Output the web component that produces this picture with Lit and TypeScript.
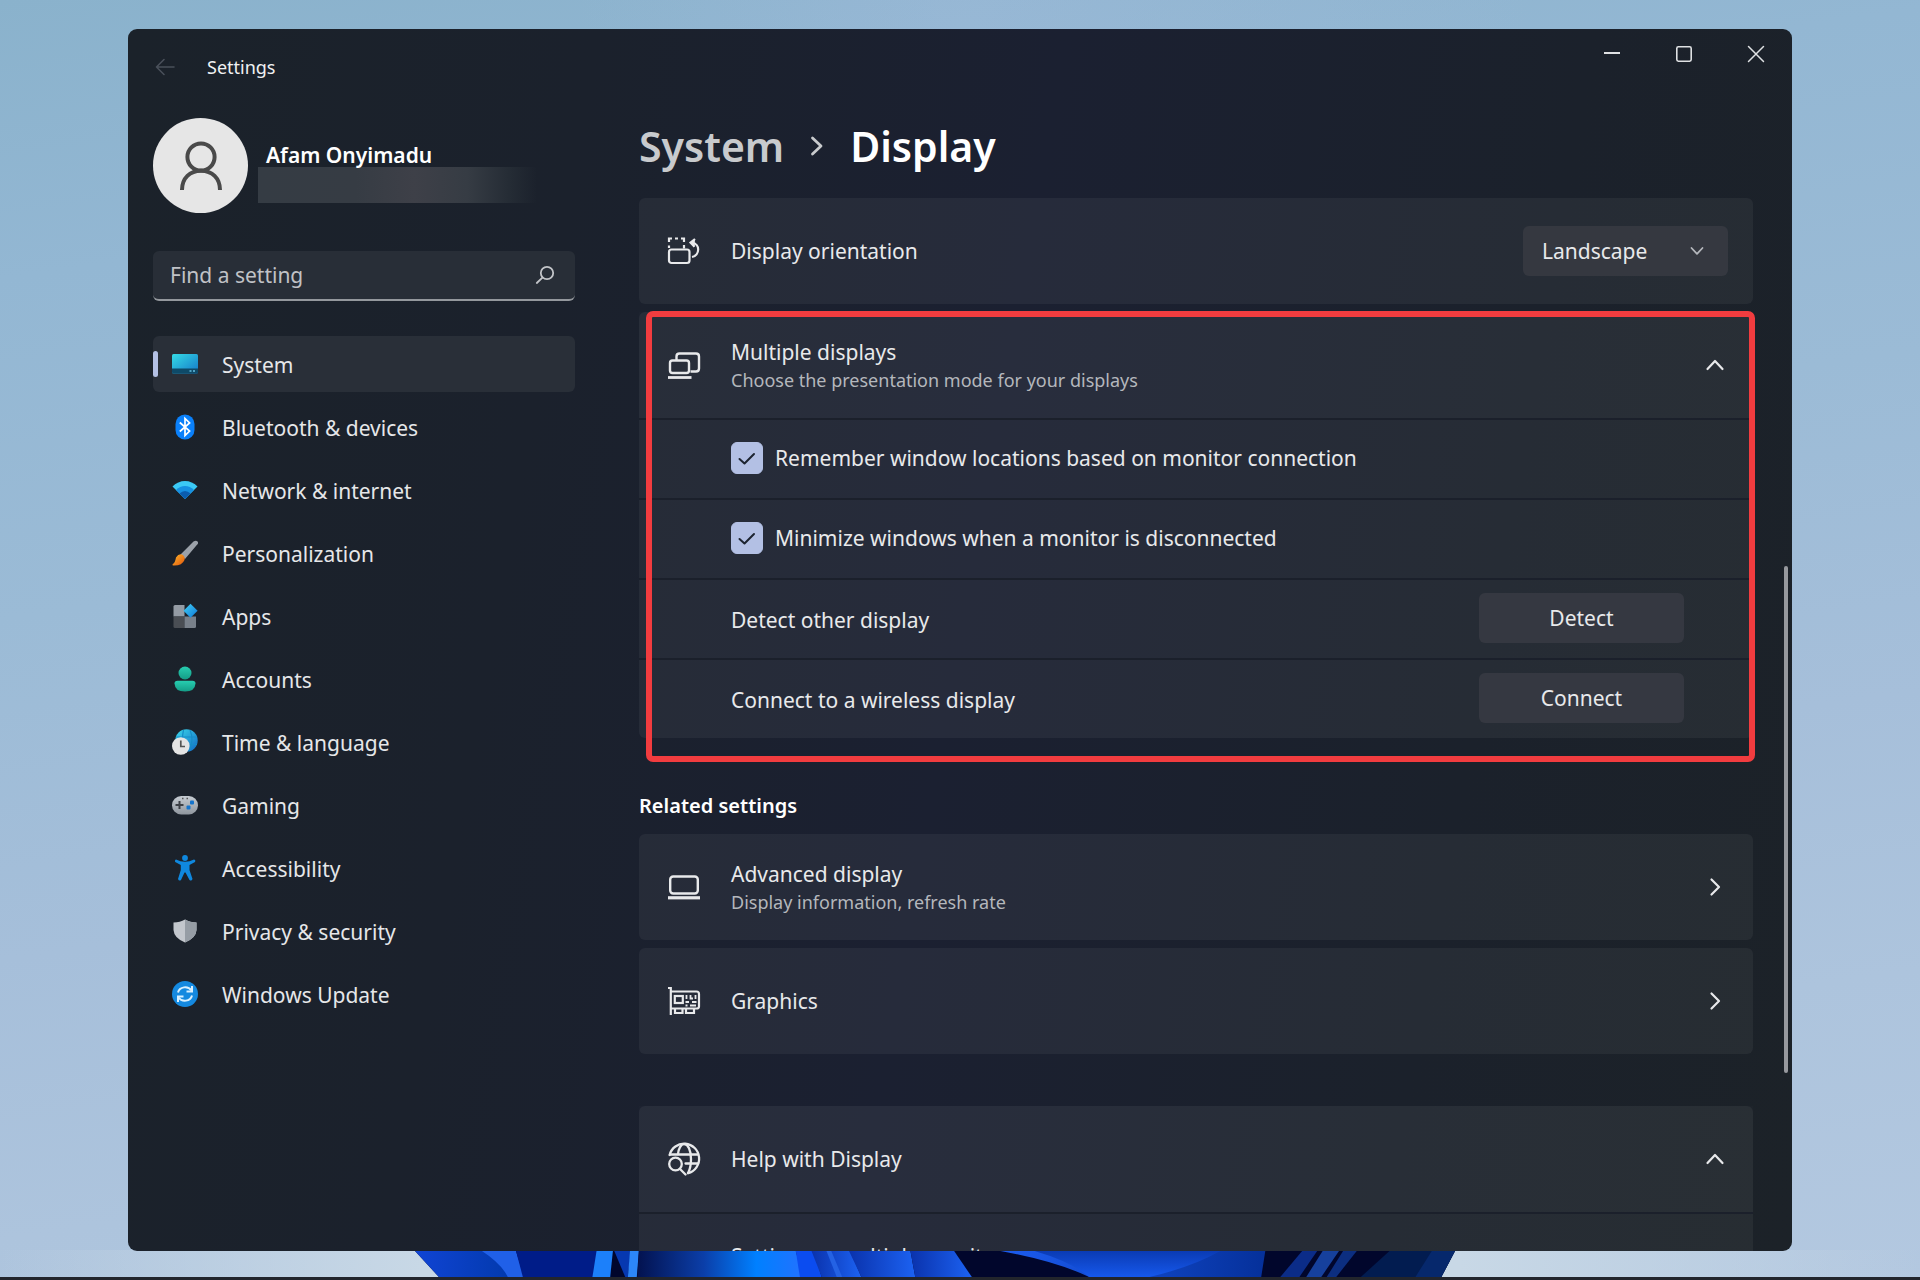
import { LitElement, html, css, svg, nothing, TemplateResult } from "lit";
import { customElement, property, state } from "lit/decorators.js";
import { classMap } from "lit/directives/class-map.js";

const lineIcons: Record<string, TemplateResult> = {
  back: svg`<svg class="icon" viewBox="0 0 20 20" width="20" height="20" fill="none" stroke="currentColor" stroke-width="1.6" stroke-linecap="round" stroke-linejoin="round"><path d="M19 10H1.5M9 2.5 1.5 10 9 17.5"/></svg>`,
  search: svg`<svg class="icon" viewBox="0 0 20 20" width="20" height="20" fill="none" stroke="currentColor" stroke-width="1.8" stroke-linecap="round"><circle cx="12" cy="8" r="6.2"/><path d="M7.4 12.6 1.8 18"/></svg>`,
  minimize: svg`<svg class="icon" viewBox="0 0 18 18" width="18" height="18" fill="none" stroke="currentColor" stroke-width="2"><path d="M1 8H17"/></svg>`,
  maximize: svg`<svg class="icon" viewBox="0 0 18 18" width="18" height="18" fill="none" stroke="currentColor" stroke-width="1.6"><rect x="1.8" y="1.8" width="14.4" height="14.4" rx="1.6"/></svg>`,
  close: svg`<svg class="icon" viewBox="0 0 18 18" width="18" height="18" fill="none" stroke="currentColor" stroke-width="1.5" stroke-linecap="round"><path d="M1.5 1.5 16.5 16.5M16.5 1.5 1.5 16.5"/></svg>`,
  crumb: svg`<svg class="icon" viewBox="0 0 14 20" width="14" height="20" fill="none" stroke="currentColor" stroke-width="2.8" stroke-linecap="round" stroke-linejoin="round"><path d="M2.5 2 11 10 2.5 18"/></svg>`,
  up: svg`<svg class="icon" viewBox="0 0 20 14" width="20" height="14" fill="none" stroke="currentColor" stroke-width="2.2" stroke-linecap="round" stroke-linejoin="round"><path d="M2.5 11 10 3 17.5 11"/></svg>`,
  down: svg`<svg class="icon" viewBox="0 0 14 10" width="14" height="10" fill="none" stroke="currentColor" stroke-width="1.8" stroke-linecap="round" stroke-linejoin="round"><path d="M1.5 2 7 7.8 12.5 2"/></svg>`,
  right: svg`<svg class="icon" viewBox="0 0 20 20" width="20" height="20" fill="none" stroke="currentColor" stroke-width="2.2" stroke-linecap="round" stroke-linejoin="round"><path d="M6.500 2.500 14 10 6.500 17.500"/></svg>`,
  check: svg`<svg class="icon tick" viewBox="0 0 20 16" width="20" height="16" fill="none" stroke="currentColor" stroke-width="2" stroke-linecap="round" stroke-linejoin="round"><path d="M2.5 9 7.5 13.5 17 4"/></svg>`,
  person: svg`<svg class="icon" viewBox="0 0 44 50" width="44" height="50" fill="none" stroke="#4a4a4a" stroke-width="4"><circle cx="22" cy="16" r="13.600"/><path d="M3 49C3 37 11 29.800 22 29.800S41 37 41 49"/></svg>`,
  orientation: svg`<svg class="icon" viewBox="0 0 34 34" width="34" height="34" fill="none" stroke="currentColor" stroke-width="2.200"><rect x="2" y="15.500" width="20.500" height="13.500" rx="2.500"/><path d="M2 14V11.500M2 8V4.500H5M8 4.500H11M14 4.500H17V8M17 11V14.500"/><path d="M25 23C33 21.500 33.500 9.500 25 8.800"/><path d="M28 5 23.500 8.600 27.500 12.800" fill="currentColor"/></svg>`,
  multiple: svg`<svg class="icon" viewBox="0 0 34 34" width="34" height="34" fill="none" stroke="currentColor" stroke-width="2.400"><path d="M9.500 12V8.500Q9.500 5.500 12.500 5.500H29Q32 5.500 32 8.500V20.500Q32 23.500 29 23.500H23.500"/><rect x="3" y="12.500" width="19" height="12.500" rx="2.500"/><path d="M1 29.500H24.500" stroke-width="2.800"/></svg>`,
  laptop: svg`<svg class="icon" viewBox="0 0 34 34" width="34" height="34" fill="none" stroke="currentColor" stroke-width="2.400"><rect x="3.200" y="6.500" width="27.600" height="17" rx="3"/><path d="M1 27.800H33" stroke-width="3.200"/></svg>`,
  graphics: svg`<svg class="icon" viewBox="0 0 34 34" width="34" height="34" fill="none" stroke="currentColor" stroke-width="2.200"><path d="M1 4H3.800V31"/><path d="M4 7.500H29.500Q32 7.500 32 10V22.500Q32 24.500 29.500 24.500H4"/><rect x="7.800" y="12" width="8" height="7"/><path d="M8 25V29H15.500V25M19 25V29H27V25"/><path d="M19.500 11V15M23.500 11V14.500H26M28.500 11V15M18.500 18H22M25 18H29.500M18.500 21.500H20.500M23 21.500H29" stroke-width="1.800"/></svg>`,
  help: svg`<svg class="icon" viewBox="0 0 34 34" width="34" height="34" fill="none" stroke="currentColor" stroke-width="2.300" stroke-linecap="round"><path d="M2.600 13A15 15 0 1 1 21 31.200"/><path d="M3 12.500H31M18.500 21.500H31"/><path d="M17 2.200C21 2.200 24 8 24 17S22.500 28 21 31M17 2.200C14 2.200 11.500 6.500 11 12"/><circle cx="8.500" cy="22" r="6.300"/><path d="M13 27 18.500 32.500"/></svg>`,
};

const navIcons: Record<string, TemplateResult> = {
  System: svg`<svg viewBox="0 0 26 26" width="26" height="26"><defs><linearGradient id="g" x2="1" y2="1"><stop stop-color="#35dbe6"/><stop offset="1" stop-color="#1478c8"/></linearGradient></defs><rect y="3" width="26" height="19.500" rx="1.500" fill="url(#g)"/><path d="M0 17.500H26V21Q26 22.500 24.500 22.500H1.500Q0 22.500 0 21Z" fill="#0e4a68"/><path d="M17.500 20H19.500M21 20H23" stroke="#66bfe0" stroke-width="1.500"/></svg>`,
  "Bluetooth & devices": svg`<svg viewBox="0 0 26 26" width="26" height="26"><rect x="3.500" y=".5" width="19" height="25" rx="9.500" fill="#0a80fa"/><path d="M7.800 8.500 17.600 17 13 21.500V4.500L17.600 9 7.800 17.500" fill="none" stroke="#fff" stroke-width="1.700"/></svg>`,
  "Network & internet": svg`<svg viewBox="0 0 26 26" width="26" height="26"><path d="M.5 9.500Q6 4 13 4T25.500 9.500L13 22Z" fill="#3bc9f5"/><path d="M4 13Q8 9 13 9T22 13L13 22Z" fill="#1690e2"/><path d="M7.500 16.500Q10 14 13 14T18.500 16.500L13 22Z" fill="#0b5cae"/></svg>`,
  Personalization: svg`<svg viewBox="0 0 26 26" width="26" height="26"><defs><linearGradient id="g" x2="1" y2="1"><stop stop-color="#ffb72a"/><stop offset="1" stop-color="#e0560e"/></linearGradient></defs><path d="M8.500 14.500 21.500 1.500Q24 0 25.500 1.500T24.800 5L13 19Z" fill="#9ba1a9"/><path d="M4 17.500Q6.500 13.500 10 14.500 13.500 16.500 12.500 20 10 26 1 25.500 0 25 .8 24 3 23 4 17.500Z" fill="url(#g)"/></svg>`,
  Apps: svg`<svg viewBox="0 0 26 26" width="26" height="26"><defs><linearGradient id="g" x2="1" y2="1"><stop stop-color="#43d0f5"/><stop offset="1" stop-color="#0d78d8"/></linearGradient></defs><path d="M1.500 3.500Q1.500 2 3 2H12.500V13.500H1.500Z" fill="#949ba4"/><path d="M1.500 13.500H12.500V25H3Q1.500 25 1.500 23.500Z" fill="#4a4e54"/><path d="M12.500 13.500H24V23.500Q24 25 22.500 25H12.500Z" fill="#78808a"/><path d="M18.500 .8 25.600 7.800 18.500 14.800 11.500 7.800Z" fill="url(#g)"/></svg>`,
  Accounts: svg`<svg viewBox="0 0 26 26" width="26" height="26"><defs><linearGradient id="g" x2="0" y2="1"><stop stop-color="#27cdb0"/><stop offset="1" stop-color="#149c86"/></linearGradient></defs><circle cx="13" cy="7" r="6.500" fill="url(#g)"/><path d="M5.500 14.800H20.500Q23.500 14.800 23.500 17.500 23 25.600 13 25.600T2.500 17.500Q2.500 14.800 5.500 14.800Z" fill="url(#g)"/></svg>`,
  "Time & language": svg`<svg viewBox="0 0 26 26" width="26" height="26"><defs><linearGradient id="g" x2="1" y2="1"><stop stop-color="#3cd8ea"/><stop offset="1" stop-color="#1068c4"/></linearGradient></defs><circle cx="14.500" cy="11.500" r="11.200" fill="url(#g)"/><path d="M4 8H25M5 15.500H25M11.500 1Q9 11 13 22M18 1Q22.500 11 17 22" fill="none" stroke="#168cc8" stroke-width="1.200"/><circle cx="8.800" cy="17" r="8.800" fill="#e4e4e4"/><path d="M8.800 11.500V17.500H13" fill="none" stroke="#555" stroke-width="1.700"/></svg>`,
  Gaming: svg`<svg viewBox="0 0 26 26" width="26" height="26"><defs><linearGradient id="g" x2="0" y2="1"><stop stop-color="#c6ccd2"/><stop offset="1" stop-color="#8f969e"/></linearGradient></defs><rect y="4" width="26" height="18.500" rx="9.200" fill="url(#g)"/><path d="M3.500 13H11.500M7.500 9V17" stroke="#3c4046" stroke-width="2"/><path d="M10 6.500H11.500M14.500 6.500H16" stroke="#555" stroke-width="1.500"/><rect x="18" y="8.500" width="4" height="4" rx="1" fill="#1474cc"/><rect x="14.500" y="13.500" width="4" height="4" rx="1" fill="#1474cc"/></svg>`,
  Accessibility: svg`<svg viewBox="0 0 26 26" width="26" height="26" fill="#0f88df"><circle cx="13" cy="3" r="2.900"/><path d="M4 4.500Q13 9 22 4.500 24 5 23 7L17.500 10V15L20.500 24Q19.500 26.500 17.500 25L13.500 17.500H12.500L9 25Q7 26.500 6 24L8.800 15V10L3.200 7Q2.500 5 4 4.500Z"/></svg>`,
  "Privacy & security": svg`<svg viewBox="0 0 26 26" width="26" height="26"><path d="M13 1.500Q18 4.500 24.500 4.500V12Q24 20 13 24.500 2 20 1.500 12V4.500Q8 4.500 13 1.500Z" fill="#c3c7cd"/><path d="M13 1.500Q18 4.500 24.500 4.500V12Q24 20 13 24.500Z" fill="#969da5"/></svg>`,
  "Windows Update": svg`<svg viewBox="0 0 26 26" width="26" height="26" fill="none" stroke="#d8f0ff" stroke-width="2"><circle cx="13" cy="13" r="13" fill="#1489e0" stroke="none"/><path d="M6 11.500C7.500 5.500 16 4.500 19.500 9.500M20 14.500C18.500 20.500 10 21.500 6.500 16.500"/><path d="M20 5V10.500H14.500M6 21V15.500H11.500"/></svg>`,
};

const resets = css`
  * { box-sizing: border-box; }
  button, input, select { font: inherit; color: inherit; margin: 0; border: 0; }
  button { cursor: pointer; }
  .icon { display: block; flex: none; }
`;

@customElement("nav-icon")
class NavIcon extends LitElement {
  static styles = css`:host { display: block; width: 26px; height: 26px; } svg { display: block; }`;
  @property() name = "";
  render() {
    return navIcons[this.name] ?? nothing;
  }
}

@customElement("settings-sidebar")
class SettingsSidebar extends LitElement {
  @state() private current = "System";

  static styles = [
    resets,
    css`
      :host { display: block; padding-top: 13px; }
      .profile { display: flex; gap: 10px; align-items: center; }
      .avatar { width: 95px; height: 95px; border-radius: 50%; background: #e6e6e6; display: grid; place-items: center; flex: none; }
      .who { flex: 1; min-width: 0; padding-top: 15px; }
      .name { margin: 0; padding-left: 8px; line-height: 24px; font-weight: 600; color: #fff; }
      .mail { height: 36px; width: 88%; background: linear-gradient(90deg, #353c44 0%, #363c44 35%, #3e4048 56%, #363c44 75%, #252c35 90%, transparent 100%); }
      .search { display: flex; align-items: center; margin-top: 38px; height: 50px; padding: 0 20px 0 17px; background: #282e37; border-radius: 6px; border-bottom: 2px solid #94989d; color: #c3c5c9; }
      .search input { flex: 1; min-width: 0; padding: 0; background: none; outline: none; height: 48px; }
      .search input::placeholder { color: #c0c2c6; opacity: 1; }
      .nav { display: flex; flex-direction: column; gap: 7px; margin-top: 35px; }
      .item { display: flex; align-items: center; height: 56px; border-radius: 6px; text-decoration: none; color: #e6e7e9; gap: 12px; line-height: 28px; }
      .item::before { content: ""; width: 5px; height: 26px; border-radius: 3px; }
      .item nav-icon { margin: 0 12px 0 2px; }
      .item.active { background: #292f38; }
      .item.active::before { background: #b3c0e4; }
      .label { padding-top: 2px; }
    `,
  ];

  render() {
    return html`
      <div class="profile">
        <div class="avatar">${lineIcons.person}</div>
        <div class="who"><p class="name">Afam Onyimadu</p><div class="mail"></div></div>
      </div>
      <label class="search"><input type="text" placeholder="Find a setting" aria-label="Find a setting" />${lineIcons.search}</label>
      <nav class="nav">
        ${Object.keys(navIcons).map(
          (name) => html`<a href="#" class=${classMap({ item: true, active: name === this.current })}
            @click=${(e: Event) => { e.preventDefault(); this.current = name; }}
            ><nav-icon name=${name}></nav-icon><span class="label">${name}</span></a>`
        )}
      </nav>
    `;
  }
}

@customElement("display-page")
class DisplayPage extends LitElement {
  static styles = [
    resets,
    css`
      :host { display: block; padding-top: 13px; }
      .crumbs { display: flex; align-items: center; gap: 26px; margin-bottom: 24px; font-size: 41px; line-height: 56px; font-weight: 600; color: #fff; }
      .crumbs a { color: #c8cacd; text-decoration: none; }
      .crumbs h1 { margin: 0; font: inherit; }
      .crumbs .icon { color: #c8cacd; }
      .card { border-radius: 6px; background: rgba(255, 255, 255, 0.05); margin-bottom: 8px; }
      .head { display: flex; align-items: center; width: 100%; height: 106px; padding: 0 28px; gap: 30px; background: none; text-align: left; color: #e8e9eb; text-decoration: none; }
      .group .head { background: rgba(255, 255, 255, 0.01); }
      .head.narrow { padding-right: 25px; }
      .text { flex: 1; display: flex; flex-direction: column; }
      .title { line-height: 30px; }
      .hint { font-size: 18px; line-height: 26px; color: #b4b7bc; }
      .group { position: relative; }
      .frame { position: absolute; top: -1px; left: 7px; right: -2px; bottom: -24px; border: 6px solid #f23c3f; border-radius: 7px; pointer-events: none; }
      .row { display: flex; align-items: center; justify-content: space-between; height: 80px; padding: 0 69px 2px 92px; border-top: 2px solid #1b202b; }
      .choice { display: flex; align-items: center; gap: 12px; line-height: 28px; }
      .caption { padding-top: 4px; }
      .box { display: grid; place-items: center; color: #1d2430; }
      .box > * { grid-area: 1 / 1; }
      .box input { appearance: none; width: 32px; height: 32px; border-radius: 6px; border: 1px solid #8d949c; }
      .box input:checked { background: #b3c0e4; border-color: #b3c0e4; }
      .box input:not(:checked) + .tick { visibility: hidden; }
      .tick { pointer-events: none; }
      .push { width: 205px; height: 50px; border-radius: 6px; background: #353841; }
      .picker { display: grid; align-items: center; }
      .picker > * { grid-area: 1 / 1; }
      .picker select { appearance: none; width: 205px; height: 50px; padding: 0 19px; border-radius: 6px; background: #353840; }
      .picker .icon { justify-self: end; margin-right: 24px; pointer-events: none; color: #b4b7bc; }
      .section { margin: 54px 0 14px; font-size: 20px; line-height: 28px; font-weight: 600; color: #fff; }
      .help { margin-top: 52px; }
      .help .row { height: 84px; }
      .link { color: #e8e9eb; text-decoration: none; }
    `,
  ];

  render() {
    return html`
      <nav class="crumbs"><a href="#">System</a>${lineIcons.crumb}<h1>Display</h1></nav>
      <section class="card">
        <div class="head narrow">
          ${lineIcons.orientation}
          <label class="text" for="orientation"><span class="title">Display orientation</span></label>
          <div class="picker"><select id="orientation"><option>Landscape</option><option>Portrait</option></select>${lineIcons.down}</div>
        </div>
      </section>
      <section class="card group">
        <button class="head">
          ${lineIcons.multiple}
          <span class="text"><span class="title">Multiple displays</span><span class="hint">Choose the presentation mode for your displays</span></span>
          ${lineIcons.up}
        </button>
        ${["Remember window locations based on monitor connection", "Minimize windows when a monitor is disconnected"].map(
          (text) => html`<div class="row"><label class="choice"><span class="box"><input type="checkbox" checked />${lineIcons.check}</span>${text}</label></div>`
        )}
        <div class="row"><span class="caption">Detect other display</span><button class="push">Detect</button></div>
        <div class="row"><span class="caption">Connect to a wireless display</span><button class="push">Connect</button></div>
        <div class="frame"></div>
      </section>
      <h2 class="section">Related settings</h2>
      <section class="card">
        <a class="head" href="#">
          ${lineIcons.laptop}
          <span class="text"><span class="title">Advanced display</span><span class="hint">Display information, refresh rate</span></span>
          ${lineIcons.right}
        </a>
      </section>
      <section class="card">
        <a class="head" href="#">${lineIcons.graphics}<span class="text">Graphics</span>${lineIcons.right}</a>
      </section>
      <section class="card group help">
        <button class="head">${lineIcons.help}<span class="text">Help with Display</span>${lineIcons.up}</button>
        <div class="row"><a class="link caption" href="#">Setting up multiple monitors</a></div>
      </section>
    `;
  }
}

@customElement("app-root")
class AppRoot extends LitElement {
  static styles = [
    resets,
    css`
      :host {
        position: relative; display: flex; flex-direction: column; height: 100vh; padding: 29px 128px 0;
        font-family: "Noto Sans", "Open Sans", sans-serif; font-size: 21px; color: #e8e9eb;
        background:
          linear-gradient(90deg, transparent, #c8d8e6 22%, #c8d8e6 76%, transparent) bottom / 100% 30px no-repeat,
          linear-gradient(90deg, transparent 30%, rgba(170, 190, 225, 0.3) 50%, transparent 80%),
          linear-gradient(172deg, #8ab2cc 0%, #93b7d3 18%, #9bbbd6 40%, #a6bfda 62%, #adc4dd 80%, #b3c8e0 100%);
        box-sizing: border-box; overflow: hidden;
      }
      .bloom { position: absolute; left: 20.83%; bottom: 3px; width: 55.73%; height: 26px; }
      .window { position: relative; flex: 1; min-height: 0; display: flex; flex-direction: column; border-radius: 9px; overflow: hidden; background: linear-gradient(100deg, #1b222a 0%, #1b212c 25%, #1b2031 50%, #1b212b 78%, #1c2228 100%); }
      .titlebar { display: flex; align-items: center; height: 76px; flex: none; padding-left: 27px; }
      .back { display: grid; place-items: center; padding: 0; background: none; color: #49505a; }
      .title { flex: 1; margin-left: 32px; font-size: 18px; line-height: 26px; color: #f0f1f2; }
      .controls { display: flex; align-self: flex-start; }
      .controls button { display: grid; place-items: center; width: 72px; height: 50px; background: none; color: #dfe1e3; }
      .body { flex: 1; min-height: 0; display: grid; grid-template-columns: 422px minmax(0, 1fr) 4px; padding: 0 4px 0 25px; }
      .content { margin: 0 29px 0 64px; padding-right: 2px; min-height: 0; overflow: hidden; }
      .track { display: grid; grid-template-rows: 461fr 507fr 178fr; }
      .thumb { grid-row: 2; border-radius: 2px; background: #97999e; }
      .taskbar { flex: none; height: 3px; margin: 26px -128px 0; background: #22252c; }
    `,
  ];

  render() {
    return html`
      <svg class="bloom" viewBox="0 0 1568 80" preserveAspectRatio="none" aria-hidden="true">
        <defs>
          <linearGradient id="a"><stop stop-color="#1044d4" /><stop offset="1" stop-color="#0038a8" /></linearGradient>
          <linearGradient id="b"><stop stop-color="#03124f" /><stop offset=".4" stop-color="#0b3ea8" /><stop offset=".72" stop-color="#0080ff" /><stop offset="1" stop-color="#2272ff" /></linearGradient>
          <linearGradient id="c"><stop stop-color="#0a32ac" /><stop offset="1" stop-color="#1c62f2" /></linearGradient>
          <linearGradient id="d" x2="0" y2="1"><stop stop-color="#0a3bb4" /><stop offset="1" stop-color="#1658ec" /></linearGradient>
          <linearGradient id="e"><stop stop-color="#1c5cf0" /><stop offset="1" stop-color="#05309a" /></linearGradient>
        </defs>
        <path d="M22 0H1546L1526 80H57Z" fill="#01062c" />
        <path d="M22 0H140L180 80H57Z" fill="url(#a)" />
        <path d="M120 0H170L182 80H158Q148 38 120 0Z" fill="#2060e8" />
        <path d="M170 0H290L284 80H180Z" fill="#001c88" />
        <path d="M288 0H312L308 80H282Z" fill="#1c80fa" />
        <path d="M314 0H338L334 80H330Z" fill="#0638b0" />
        <path d="M337 0H350L347 80H334Z" fill="#2c86f8" />
        <path d="M350 0H580L590 80H348Z" fill="url(#b)" />
        <path d="M580 0H606L618 80H586Z" fill="#0b4cf0" />
        <path d="M603 0H660L676 80H618Z" fill="url(#c)" />
        <path d="M625 0H632L648 80H640Z" fill="#2462e4" />
        <path d="M658 0H748L755 80H676Z" fill="url(#c)" />
        <path d="M748 0H812L838 80H755Z" fill="url(#c)" />
        <path d="M880 0H1268L1262 80H1010Q960 30 880 0Z" fill="url(#e)" />
        <path d="M930 0H1202Q1160 50 1098 80H1010Q985 34 930 0Z" fill="url(#d)" />
        <path d="M1322 0H1344L1318 80H1290Z" fill="#0b2c88" />
        <path d="M1352 0H1376L1350 80H1328Z" fill="#16409c" />
        <path d="M1382 0H1402L1372 80H1358Z" fill="#0c2e80" />
        <path d="M1450 0H1546L1526 80H1408Z" fill="#021c50" />
        <path d="M1512 0H1546L1526 80H1488Z" fill="#06286c" />
      </svg>
      <div class="window">
        <header class="titlebar">
          <button class="back" aria-label="Back">${lineIcons.back}</button>
          <span class="title">Settings</span>
          <div class="controls">
            <button aria-label="Minimize">${lineIcons.minimize}</button>
            <button aria-label="Maximize">${lineIcons.maximize}</button>
            <button aria-label="Close">${lineIcons.close}</button>
          </div>
        </header>
        <div class="body">
          <settings-sidebar></settings-sidebar>
          <main class="content"><display-page></display-page></main>
          <div class="track"><div class="thumb"></div></div>
        </div>
      </div>
      <div class="taskbar"></div>
    `;
  }
}
